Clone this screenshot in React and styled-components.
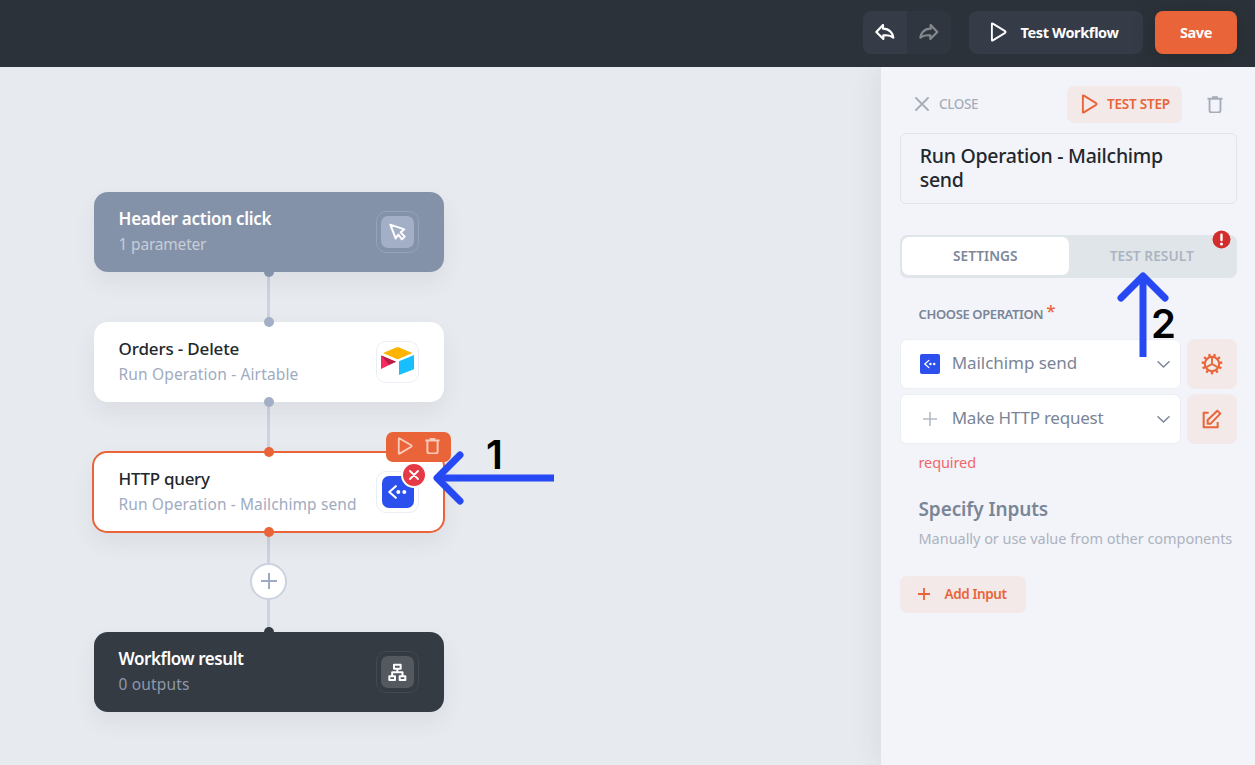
import React from "react";
import styled, { createGlobalStyle, css } from "styled-components";

const GlobalStyle = createGlobalStyle`
  * { box-sizing: border-box; }
  html, body { margin: 0; padding: 0; }
  body {
    font-family: "Noto Sans", "Open Sans", sans-serif;
    background: #e7eaef;
    overflow: hidden;
  }
  button { font-family: inherit; border: 0; margin: 0; padding: 0; cursor: pointer; }
  svg { display: block; flex: none; }
`;

const orange = "#e96438";
const tint = "#f2e9e8";

/* ---------- layout ---------- */
const Page = styled.div`
  position: relative;
  display: flex;
  flex-direction: column;
  width: 1255px;
  height: 765px;
  overflow: hidden;
`;
const TopBar = styled.header`
  flex: none;
  height: 67px;
  padding: 11px 18px 0 0;
  display: flex;
  justify-content: flex-end;
  align-items: flex-start;
  background: #2b3239;
  overflow: hidden;
  z-index: 2;
`;
const Body = styled.div`
  flex: 1;
  display: flex;
  min-height: 0;
`;
const Canvas = styled.main`
  flex: 1;
  padding: 125px 0 0 94px;
  background: #e7eaef;
`;
const Panel = styled.aside`
  width: 374px;
  padding: 19px 18px 0 19px;
  background: #f3f4f9;
  box-shadow: 0 0 30px rgba(60, 75, 90, 0.1);
`;

/* ---------- top bar ---------- */
const History = styled.div`
  display: flex;
  width: 88px;
  height: 43px;
  margin-right: 18px;
  border-radius: 8px;
  overflow: hidden;
`;
const HistoryButton = styled.button`
  flex: 1;
  display: flex;
  align-items: center;
  justify-content: center;
  padding-bottom: 1px;
  color: ${(p) => (p.$muted ? "#85898e" : "#fff")};
  background: ${(p) => (p.$muted ? "#30363f" : "#353b47")};
`;
const BarButton = styled.button`
  display: flex;
  align-items: center;
  justify-content: center;
  height: 43px;
  padding-bottom: 2px;
  border-radius: 8px;
  color: #fff;
  font-size: 14.5px;
  font-weight: 700;
  letter-spacing: -0.35px;
  line-height: 20px;
`;
const TestWorkflow = styled(BarButton)`
  width: 174px;
  margin-right: 12px;
  padding-right: 3px;
  gap: 13px;
  background: #353b47;
`;
const Save = styled(BarButton)`
  width: 82px;
  background: ${orange};
  box-shadow: 0 4px 24px rgba(0, 0, 0, 0.18);
`;

/* ---------- flow ---------- */
const Flow = styled.div`
  display: flex;
  flex-direction: column;
  width: 350px;
`;
const tones = {
  slate: css`
    background: #8492a9;
    --title: #fff; --sub: #c7cdd8; --frame: #95a2b9;
  `,
  dark: css`
    background: #343b43;
    --title: #fff; --sub: #8d98ac; --frame: #404954;
  `,
  light: css`
    background: #fff;
    --title: #22272d; --sub: #a0abbf; --frame: #eceef5;
  `,
};
const Card = styled.section`
  position: relative;
  display: flex;
  justify-content: space-between;
  height: 80px;
  padding: 14px 25px 0 24.6px;
  border-radius: 14px;
  box-shadow: 0 10px 22px rgba(50, 60, 75, 0.07);
  ${(p) => tones[p.$tone]}
  ${(p) =>
    p.$selected &&
    css`
      width: 353px;
      height: 82px;
      margin: -1px 0 -1px -2px;
      padding: 13px 24px 0 24.6px;
      border: 2px solid ${orange};
      border-radius: 15px;
    `}
`;
const CardTitle = styled.div`
  font-size: 17px;
  line-height: 26px;
  font-weight: ${(p) => p.$weight || 500};
  letter-spacing: ${(p) => p.$track}px;
  color: var(--title);
  white-space: nowrap;
`;
const CardSub = styled.div`
  font-size: 15.5px;
  line-height: 25px;
  letter-spacing: ${(p) => p.$track}px;
  color: var(--sub);
  white-space: nowrap;
`;
const IconFrame = styled.div`
  position: relative;
  display: flex;
  align-items: center;
  justify-content: center;
  width: 43px;
  height: 42px;
  margin-top: 5px;
  border: 1px solid var(--frame);
  border-radius: 10px;
`;
const IconTile = styled.div`
  display: flex;
  align-items: center;
  justify-content: center;
  width: ${(p) => p.$size || 33}px;
  height: ${(p) => (p.$size ? p.$size : 32)}px;
  border-radius: ${(p) => p.$radius ?? 7}px;
  background: ${(p) => p.$bg};
  color: ${(p) => p.$color || "#fff"};
`;
const LogoTile = styled(IconTile)`
  padding-bottom: 2px;
`;
const Port = styled.i`
  position: absolute;
  left: calc(50% - 5px);
  ${(p) => (p.$top ? "top" : "bottom")}: ${(p) => (p.$selected ? -6 : -5)}px;
  width: 10px;
  height: 10px;
  border-radius: 50%;
  background: ${(p) => p.$color};
`;
const Link = styled.div`
  display: flex;
  align-items: center;
  justify-content: center;
  width: 3px;
  height: ${(p) => p.$length}px;
  margin-left: 173px;
  padding-bottom: 1px;
  background: #ccd2de;
`;
const AddStep = styled.button`
  flex: none;
  display: flex;
  align-items: center;
  justify-content: center;
  width: 37px;
  height: 37px;
  padding-bottom: 1px;
  border: 2px solid #ccd2de;
  border-radius: 50%;
  background: #fff;
  color: #9caac3;
`;
const CardTools = styled.div`
  position: absolute;
  top: -21px;
  right: -8px;
  display: flex;
  align-items: center;
  justify-content: center;
  gap: 12px;
  width: 65px;
  height: 30px;
  padding-bottom: 2px;
  border-radius: 7px;
  background: ${orange};
  color: #f8cabb;
`;
const ErrorBadge = styled.div`
  position: absolute;
  top: -10.5px;
  right: -9px;
  display: flex;
  align-items: center;
  justify-content: center;
  width: 26px;
  height: 26px;
  border: 2.5px solid #fff;
  border-radius: 50%;
  background: #e63946;
  color: #fff;
`;

/* ---------- side panel ---------- */
const PanelHead = styled.div`
  display: flex;
  align-items: center;
  height: 37px;
  padding-left: 15px;
`;
const Close = styled.button`
  display: flex;
  align-items: center;
  gap: 10px;
  margin-right: auto;
  padding-bottom: 1px;
  background: none;
  color: #a6adba;
  font-size: 13.5px;
  font-weight: 500;
  letter-spacing: -0.35px;
`;
const SoftButton = styled.button`
  display: flex;
  align-items: center;
  gap: ${(p) => p.$gap}px;
  width: ${(p) => p.$width}px;
  height: 37px;
  padding: 0 0 2px ${(p) => p.$pad}px;
  border-radius: 7px;
  background: ${tint};
  color: ${orange};
  font-size: 13.5px;
  font-weight: 600;
  letter-spacing: ${(p) => p.$track}px;
  white-space: nowrap;
`;
const DeleteButton = styled.button`
  margin: 0 14px 0 25px;
  background: none;
  color: #a6adba;
`;
const StepName = styled.div`
  height: 71px;
  margin-top: 10px;
  padding: 10px 60px 0 18.7px;
  border: 1px solid #e1e4e9;
  border-radius: 6px;
  color: #22272d;
  font-size: 19.5px;
  line-height: 24px;
  font-weight: 500;
  letter-spacing: -0.27px;
`;
const Tabs = styled.div`
  position: relative;
  display: flex;
  height: 43px;
  margin-top: 31px;
  padding: 2px 2px 3px;
  border-radius: 7px;
  background: #e0e5e9;
`;
const Tab = styled.button`
  flex: 1;
  padding-bottom: 2px;
  border-radius: 7px;
  font-size: 13.7px;
  font-weight: 600;
  letter-spacing: ${(p) => (p.$active ? 0 : 0.05)}px;
  background: ${(p) => (p.$active ? "#fff" : "none")};
  color: ${(p) => (p.$active ? "#7d889a" : "#acb4c1")};
`;
const TabAlert = styled.div`
  position: absolute;
  top: -5px;
  right: 6.5px;
`;
const FieldLabel = styled.label`
  display: flex;
  margin: 26px 0 0 18.6px;
  height: 35px;
  color: #7a8597;
  font-size: 13px;
  line-height: 20px;
  font-weight: 600;
  letter-spacing: -0.38px;
`;
const Star = styled.span`
  margin: -3px 0 0 3px;
  color: ${orange};
  font-size: 17px;
  font-weight: 500;
`;
const FieldRow = styled.div`
  display: flex;
  justify-content: space-between;
  margin-bottom: 5px;
`;
const Select = styled.div`
  display: flex;
  align-items: center;
  width: 281px;
  height: 50px;
  padding: 0 10.5px 0 19px;
  border: 1px solid #ebeef5;
  border-radius: 7px;
  background: #fff;
  color: #7a8597;
`;
const SelectText = styled.span`
  flex: 1;
  margin: -3px 0 0 11.7px;
  font-size: 17px;
  letter-spacing: ${(p) => p.$track}px;
`;
const SquareButton = styled.button`
  display: flex;
  align-items: center;
  justify-content: center;
  width: 50px;
  height: 50px;
  border-radius: 8px;
  background: ${tint};
  color: ${orange};
`;
const Required = styled.div`
  margin: 8px 0 0 18.5px;
  color: #f0666b;
  font-size: 14.5px;
  line-height: 20px;
  letter-spacing: -0.1px;
`;
const SectionTitle = styled.h2`
  margin: 24px 0 0 18.5px;
  color: #7a8597;
  font-size: 19px;
  line-height: 26px;
  font-weight: 600;
  letter-spacing: -0.1px;
`;
const SectionHint = styled.p`
  margin: 6px 0 28px 18.5px;
  color: #abb3c1;
  font-size: 14.5px;
  line-height: 20px;
  letter-spacing: -0.04px;
  white-space: nowrap;
`;

/* ---------- annotations ---------- */
const Arrows = styled.svg`
  position: absolute;
  inset: 0;
  z-index: 5;
  pointer-events: none;
`;
const StepNumber = styled.div`
  position: absolute;
  z-index: 6;
  left: ${(p) => p.$x}px;
  top: ${(p) => p.$y}px;
  color: #000;
  font-family: Inter, sans-serif;
  font-size: 40px;
  line-height: 48px;
  font-weight: 600;
`;

/* ---------- icons ---------- */
const line = { fill: "none", stroke: "currentColor", strokeLinecap: "round", strokeLinejoin: "round" };

const ReplyIcon = ({ flip }) => (
  <svg width="20" height="18" viewBox="76 70 60 54" {...line} strokeWidth="6.5">
    <path transform={flip ? "translate(211 0) scale(-1 1)" : undefined}
      d="M80 97 100 76V87C121 87 130 103 131 114 121 105 112 107 101 107V118Z" />
  </svg>
);
const PlayIcon = ({ w = 17, h = 20, sw = 2 }) => (
  <svg width={w} height={h} viewBox="0 0 18 20" preserveAspectRatio="none" {...line} strokeWidth={sw}>
    <path d="M2 2.1 Q2 1 3 1.6L16 9.2Q17 10 16 10.8L3 18.4Q2 19 2 17.9Z" />
  </svg>
);
const TrashIcon = ({ s = 18, sw = 2 }) => (
  <svg width={s} height={s * 1.1} viewBox="0 0 17 18.7" fill="none" stroke="currentColor" strokeWidth={sw}>
    <path d="M.5 2.9H16.5M5.300 1.200H11.700M2.700 3V15.200Q2.700 17.500 4.800 17.500H12.200Q14.300 17.500 14.300 15.200V3" />
  </svg>
);
const CrossIcon = ({ s, sw }) => (
  <svg width={s} height={s} viewBox={`0 0 ${s} ${s}`} {...line} strokeWidth={sw}>
    <path d={`M1 1 ${s - 1} ${s - 1}M${s - 1} 1 1 ${s - 1}`} />
  </svg>
);
const PlusIcon = ({ s, sw }) => (
  <svg width={s} height={s} viewBox={`0 0 ${s} ${s}`} fill="none" stroke="currentColor" strokeWidth={sw}>
    <path d={`M${s / 2} 0V${s}M0 ${s / 2}H${s}`} />
  </svg>
);
const CursorIcon = () => (
  <svg width="18" height="18" viewBox="926 129 54 54" {...line} strokeWidth="6">
    <path d="M930 134 972 148 961 157 973 170 965 178 954 164 946 175Z" />
  </svg>
);
const SitemapIcon = () => (
  <svg width="19" height="19" viewBox="924 429 57 57" fill="none" stroke="currentColor" strokeWidth="6" strokeLinejoin="round">
    <path d="M942 434.500H962V446H942ZM928 468.500H945V480H928ZM959 468.500H976V480H959ZM952 446V456M936.500 468V456.500H967.500V468" />
  </svg>
);
const AirtableIcon = () => (
  <svg width="35" height="30" viewBox="900 78 105 90">
    <path fill="#fcb400" d="M909 99 950 82Q953 81 956 82L997 99 956 117Q953 118 950 117Z" />
    <path fill="#f82b60" d="M903 107 948 125 903 147Z" />
    <path fill="#ba1e45" d="M903 106 948 125 927 134Z" />
    <path fill="#18bfff" d="M957 124 1002 105V148L957 165Z" />
  </svg>
);
const CodeIcon = ({ w = 20 }) => (
  <svg width={w} height={w * 0.8} viewBox="0.5 0 20 16" {...line} strokeWidth="2.1">
    <path d="M8.300 2.200 1.800 8 8.300 13.800" />
    <circle cx="10.800" cy="8" r="2" fill="currentColor" stroke="none" />
    <circle cx="16.800" cy="8" r="2" fill="currentColor" stroke="none" />
  </svg>
);
const ChevronIcon = () => (
  <svg width="13" height="8" viewBox="0 0 13 8" {...line} strokeWidth="1.5">
    <path d="M1 1.700 6.500 7 12 1.700" />
  </svg>
);
const GearIcon = () => (
  <svg width="22" height="22" viewBox="-33 -33 66 66" fill="none" stroke="currentColor">
    <circle r="21.500" strokeWidth="6" />
    {Array.from({ length: 11 }, (_, i) => (
      <path key={i} d="M0 -23V-31" strokeWidth="7" transform={`rotate(${(i + 0.5) * (360 / 11)})`} />
    ))}
    <path d="M0 -22V0M0 0 19 11M0 0-19 11" strokeWidth="5.500" />
  </svg>
);
const EditIcon = () => (
  <svg width="20" height="20" viewBox="939 372 60 60" {...line} strokeWidth="6" strokeLinecap="butt">
    <path d="M959 383H944V427H986V411" />
    <path d="M956 416V405L985 377 994 386 965 416Z" />
  </svg>
);
const AlertIcon = () => (
  <svg width="19" height="19" viewBox="0 0 19 19">
    <circle cx="9.500" cy="9.500" r="9" fill="#d22c2c" />
    <path d="M9.500 4.800V10" stroke="#fff" strokeWidth="2.400" strokeLinecap="round" />
    <circle cx="9.500" cy="14" r="1.500" fill="#fff" />
  </svg>
);

export default function App() {
  return (
    <Page>
      <GlobalStyle />
      <TopBar>
        <History>
          <HistoryButton><ReplyIcon /></HistoryButton>
          <HistoryButton $muted><ReplyIcon flip /></HistoryButton>
        </History>
        <TestWorkflow><PlayIcon />Test Workflow</TestWorkflow>
        <Save>Save</Save>
      </TopBar>

      <Body>
        <Canvas>
          <Flow>
            <Card $tone="slate">
              <div>
                <CardTitle $weight={600} $track={-0.27}>Header action click</CardTitle>
                <CardSub $track={-0.2}>1 parameter</CardSub>
              </div>
              <IconFrame><IconTile $bg="#a3afc6"><CursorIcon /></IconTile></IconFrame>
              <Port $color="#8492a9" />
            </Card>
            <Link $length={50} />
            <Card $tone="light">
              <div>
                <CardTitle $track={-0.17}>Orders - Delete</CardTitle>
                <CardSub $track={0.14}>Run Operation - Airtable</CardSub>
              </div>
              <IconFrame><LogoTile><AirtableIcon /></LogoTile></IconFrame>
              <Port $top $color="#a3afc6" />
              <Port $color="#a3afc6" />
            </Card>
            <Link $length={50} />
            <Card $tone="light" $selected>
              <div>
                <CardTitle $track={-0.3}>HTTP query</CardTitle>
                <CardSub $track={0.11}>Run Operation - Mailchimp send</CardSub>
              </div>
              <IconFrame>
                <IconTile $bg="#2b50ee" $size={32}><CodeIcon /></IconTile>
                <ErrorBadge><CrossIcon s={10} sw={1.8} /></ErrorBadge>
              </IconFrame>
              <Port $top $selected $color={orange} />
              <Port $selected $color={orange} />
              <CardTools>
                <PlayIcon w={16} h={18} sw={2.1} />
                <TrashIcon s={15} sw={2.2} />
              </CardTools>
            </Card>
            <Link $length={100}><AddStep><PlusIcon s={16} sw={2} /></AddStep></Link>
            <Card $tone="dark">
              <div>
                <CardTitle $weight={600} $track={-0.43}>Workflow result</CardTitle>
                <CardSub $track={0.15}>0 outputs</CardSub>
              </div>
              <IconFrame><IconTile $bg="#53595f"><SitemapIcon /></IconTile></IconFrame>
              <Port $top $color="#343b43" />
            </Card>
          </Flow>
        </Canvas>

        <Panel>
          <PanelHead>
            <Close><CrossIcon s={14} sw={1.8} />CLOSE</Close>
            <SoftButton $width={115} $pad={13.5} $gap={9.5} $track={-0.2}><PlayIcon />TEST STEP</SoftButton>
            <DeleteButton><TrashIcon s={16} /></DeleteButton>
          </PanelHead>
          <StepName>Run Operation - Mailchimp send</StepName>
          <Tabs>
            <Tab $active>SETTINGS</Tab>
            <Tab>TEST RESULT</Tab>
            <TabAlert><AlertIcon /></TabAlert>
          </Tabs>
          <FieldLabel>CHOOSE OPERATION<Star>*</Star></FieldLabel>
          <FieldRow>
            <Select>
              <IconTile $bg="#2b50ee" $size={20} $radius={2}><CodeIcon w={12.5} /></IconTile>
              <SelectText $track={-0.06}>Mailchimp send</SelectText>
              <ChevronIcon />
            </Select>
            <SquareButton><GearIcon /></SquareButton>
          </FieldRow>
          <FieldRow>
            <Select>
              <IconTile $size={20} $color="#b3bac6"><PlusIcon s={14} sw={1.6} /></IconTile>
              <SelectText $track={-0.24}>Make HTTP request</SelectText>
              <ChevronIcon />
            </Select>
            <SquareButton><EditIcon /></SquareButton>
          </FieldRow>
          <Required>required</Required>
          <SectionTitle>Specify Inputs</SectionTitle>
          <SectionHint>Manually or use value from other components</SectionHint>
          <SoftButton $width={126} $pad={18} $gap={14.5} $track={-0.4}><PlusIcon s={12} sw={1.8} />Add Input</SoftButton>
        </Panel>
      </Body>

      <Arrows width="1255" height="765" fill="none" stroke="#2749f3" strokeWidth="7" strokeLinejoin="round">
        <path d="M554 478H438M1143 357V276" />
        <path strokeLinecap="round" d="M460 455 437 478 460 501M1121 298 1143 276 1165 298" />
      </Arrows>
      <StepNumber $x={486} $y={430.5}>1</StepNumber>
      <StepNumber $x={1151} $y={299.5}>2</StepNumber>
    </Page>
  );
}
